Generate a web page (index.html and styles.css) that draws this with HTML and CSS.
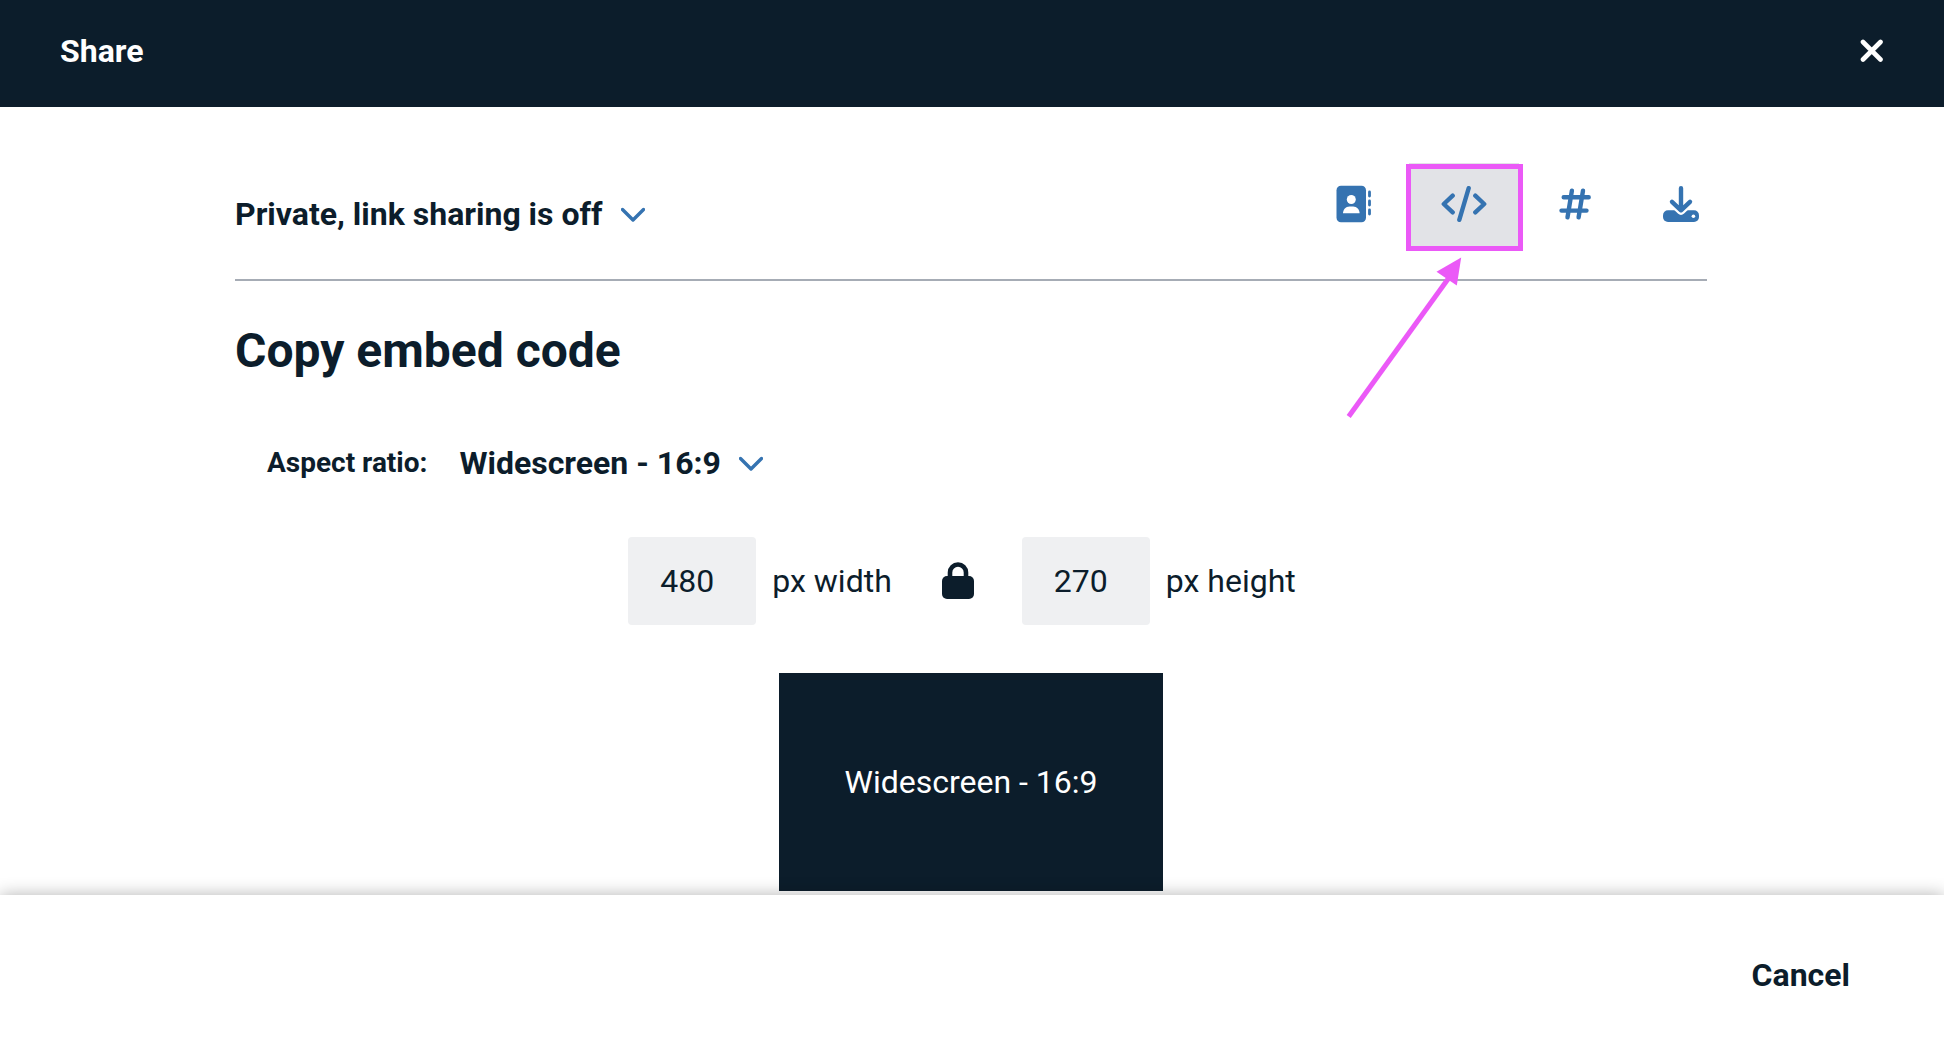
FILE: index.html
```html
<!DOCTYPE html>
<html lang="en">
<head>
<meta charset="utf-8">
<meta name="viewport" content="width=device-width, initial-scale=1">
<title>Share</title>
<link rel="stylesheet" href="styles.css">
</head>
<body>
<header class="header">
  <h1 class="header-title">Share</h1>
  <button class="close" type="button" aria-label="Close">
    <svg width="24" height="24" viewBox="0 0 24 24"><path d="M3 3l17.500 17.500M20.500 3l-17.500 17.500" fill="none" stroke="currentColor" stroke-width="4.600" stroke-linecap="round"/></svg>
  </button>
</header>

<main class="main">
  <div class="content">
    <div class="sharing">
      <div class="picker picker-sharing">
        <select class="picker-select" aria-label="Link sharing"><option>Private, link sharing is off</option></select>
        <svg class="picker-arrow" width="24" height="16" viewBox="0 0 24 16"><path d="M1.500 2.500 12 13 22.500 2.500" fill="none" stroke="currentColor" stroke-width="3.400" stroke-linecap="round" stroke-linejoin="round"/></svg>
      </div>
      <div class="tools">
        <button class="tool" type="button" aria-label="Share with contacts">
          <svg width="36" height="36" viewBox="0 0 36 36" overflow="visible"><rect x="3.500" y="-.3" width="29.500" height="36.600" rx="4.500" fill="currentColor"/><circle cx="18.300" cy="13.500" r="4.500" fill="#fff"/><path d="M10 27.300c0-4 2.700-6.900 6.500-6.900h3.600c3.800 0 6.500 2.900 6.500 6.900z" fill="#fff"/><path d="M36.500 6v4M36.500 15v4M36.500 24v4" stroke="currentColor" stroke-width="2.800" stroke-linecap="round"/></svg>
        </button>
        <button class="tool tool-active" type="button" aria-label="Copy embed code">
          <svg width="46" height="36" viewBox="0 0 46 36" fill="none" stroke="currentColor" stroke-width="4.400" stroke-linecap="round" stroke-linejoin="round"><path d="M11.700 9.700 2.800 18l8.900 8.300M34.300 9.700l8.900 8.300-8.900 8.300M27.700 2.200 18.300 33.800"/></svg>
          <svg class="pointer" width="120" height="164" viewBox="0 0 120 164" aria-hidden="true"><path d="M4.700 160.500 104 23" stroke="#eb59f7" stroke-width="5"/><path d="M117.200 1.500 92.500 15.700 112.800 29.500z" fill="#eb59f7"/></svg>
        </button>
        <button class="tool" type="button" aria-label="Copy ID">
          <svg width="32" height="36" viewBox="0 0 32 36" fill="none" stroke="currentColor" stroke-width="4.400" stroke-linecap="round"><path d="M4.700 11.200h25M2.500 24.600h25M12.900 4.700 8.500 31.300M24 4.700 19.600 31.300"/></svg>
        </button>
        <button class="tool" type="button" aria-label="Download">
          <svg width="36" height="36" viewBox="0 0 36 36"><rect y="24.300" width="36" height="11.700" rx="5" fill="currentColor"/><circle cx="30.400" cy="30.300" r="1.800" fill="#fff"/><g fill="none" stroke-linecap="round" stroke-linejoin="round"><path d="M9 15.800 18 24.300 27 15.800" stroke="#fff" stroke-width="9"/><path d="M18 2.200V24M9 15.800 18 24.300 27 15.800" stroke="currentColor" stroke-width="4.400"/></g></svg>
        </button>
      </div>
    </div>

    <h2 class="title">Copy embed code</h2>

    <div class="ratio">
      <label class="ratio-label" for="ratio">Aspect ratio:</label>
      <div class="picker">
        <select class="picker-select" id="ratio"><option>Widescreen - 16:9</option></select>
        <svg class="picker-arrow" width="24" height="16" viewBox="0 0 24 16"><path d="M1.500 2.500 12 13 22.500 2.500" fill="none" stroke="currentColor" stroke-width="3.400" stroke-linecap="round" stroke-linejoin="round"/></svg>
      </div>
    </div>

    <div class="size">
      <input class="size-input" id="width" type="text" inputmode="numeric" value="480">
      <label class="size-label" for="width">px width</label>
      <button class="lock" type="button" aria-label="Lock aspect ratio">
        <svg width="32" height="38" viewBox="0 0 32 38"><rect y="14" width="32" height="23" rx="5" fill="currentColor"/><path d="M8 16V10.500a8 8 0 0 1 16 0V16" fill="none" stroke="currentColor" stroke-width="4.600"/></svg>
      </button>
      <input class="size-input" id="height" type="text" inputmode="numeric" value="270">
      <label class="size-label" for="height">px height</label>
    </div>

    <div class="preview">Widescreen - 16:9</div>
  </div>
</main>

<footer class="footer">
  <button class="cancel" type="button">Cancel</button>
</footer>
</body>
</html>
```
FILE: styles.css
```css
* {
  box-sizing: border-box;
}

body {
  display: flex;
  flex-direction: column;
  min-height: 100vh;
  margin: 0;
  background: #fff;
  color: #0c1d2b;
  font: 400 32px/40px Roboto, sans-serif;
}

button,
input,
select {
  margin: 0;
  padding: 0;
  border: 0;
  background: none;
  color: inherit;
  font: inherit;
}

button {
  cursor: pointer;
}

svg {
  display: block;
}

.header {
  display: flex;
  align-items: center;
  justify-content: space-between;
  padding: 31px 60px 36px;
  background: #0c1d2b;
  color: #fff;
}

.header-title {
  margin: 0;
  font-size: 32px;
  font-weight: 700;
}

.main {
  flex: 1;
  padding: 0 34px 4px 32px;
}

.content {
  max-width: 1472px;
  margin: 0 auto;
}

.sharing {
  display: flex;
  align-items: flex-end;
  justify-content: space-between;
  padding: 56px 0 28px;
  border-bottom: 2px solid #a6acb5;
}

.picker {
  position: relative;
}

.picker-select {
  height: 48px;
  padding-right: 42px;
  appearance: none;
  font-weight: 700;
}

.picker-arrow {
  position: absolute;
  top: 17px;
  right: 0;
  color: #3573b1;
  pointer-events: none;
}

.picker-sharing {
  margin-bottom: 13px;
}

.tools {
  display: flex;
  gap: 8px;
  margin-right: -24px;
}

.tool {
  position: relative;
  height: 88px;
  padding: 0 32px 6px;
  color: #3573b1;
}

.tool-active {
  background: #e2e3e7;
}

.tool-active::after {
  position: absolute;
  inset: 1px -4px 0 -3px;
  border: 5px solid #eb59f7;
  content: "";
}

.pointer {
  position: absolute;
  top: 93px;
  left: -65px;
  pointer-events: none;
}

.title {
  margin: 42px 0 60px;
  font-size: 48px;
  font-weight: 700;
  line-height: 56px;
}

.ratio {
  display: flex;
  align-items: center;
  gap: 32px;
  margin-bottom: 50px;
  padding-left: 32px;
}

.ratio-label {
  font-size: 28px;
  font-weight: 700;
}

.size {
  display: flex;
  align-items: center;
  justify-content: center;
  margin-bottom: 48px;
}

.size-input {
  width: 128px;
  height: 88px;
  padding: 0 32px;
  border-radius: 4px;
  background: #eff0f2;
}

.size-label {
  padding: 0 18px 0 16px;
}

.lock {
  margin: 0 48px 0 32px;
}

.preview {
  display: flex;
  align-items: center;
  justify-content: center;
  width: 384px;
  height: 218px;
  margin: 0 auto;
  background: #0c1d2b;
  color: #fff;
}

.footer {
  position: relative;
  display: flex;
  justify-content: flex-end;
  padding: 60px 94px 45px;
  background: #fff;
  box-shadow: 0 0 16px rgba(0, 0, 0, 0.3);
}

.cancel {
  font-weight: 700;
}
```
